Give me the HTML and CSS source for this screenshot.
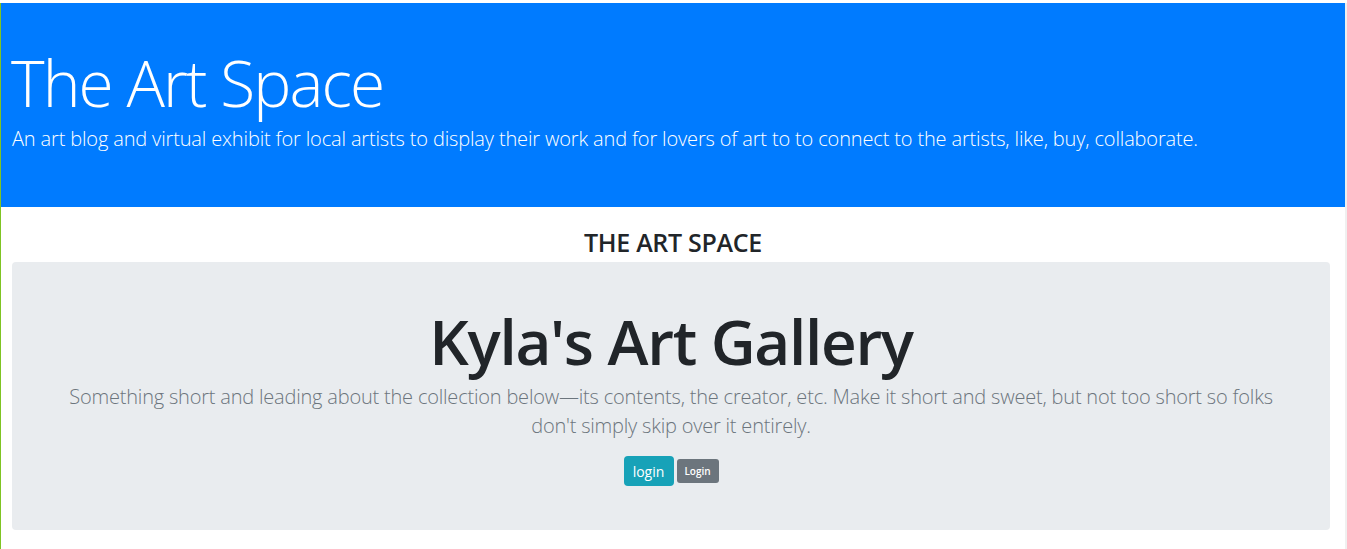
FILE: index.html
```html
<!DOCTYPE html>
<html lang="en">
<head>
<meta charset="utf-8">
<title>The Art Space</title>
<link rel="stylesheet" href="styles.css">
</head>
<body>
<div class="page">
  <header class="hero">
    <h1 class="hero-title">The Art Space</h1>
    <p class="hero-lead">An art blog and virtual exhibit for local artists to display their work and for lovers of art to to connect to the artists, like, buy, collaborate.</p>
  </header>
  <h3 class="brand">THE ART SPACE</h3>
  <section class="gallery">
    <h1 class="gallery-title">Kyla's Art Gallery</h1>
    <p class="gallery-lead">Something short and leading about the collection below—its contents, the creator, etc. Make it short and sweet, but not too short so folks don't simply skip over it entirely.</p>
    <div class="actions">
      <button class="btn btn-info">login</button>
      <button class="btn btn-secondary btn-sm">Login</button>
    </div>
  </section>
</div>
</body>
</html>
```
FILE: styles.css
```css
* { box-sizing: border-box; }
html, body { margin: 0; padding: 0; background: #fff; }
body {
  font-family: "Open Sans", "Noto Sans", "Liberation Sans", sans-serif;
  color: #212529;
  width: 1347px;
  height: 549px;
  overflow: hidden;
}
.page {
  width: 1345px;
  height: 549px;
  margin-top: 3px;
  border-left: 1px solid #7fc423;
  box-shadow: 2px 0 0 #f0f0f0;
}
.hero {
  background: #007bff;
  color: #fff;
  height: 204px;
  padding: 42px 11px 0 10px;
}
.hero-title {
  margin: 0;
  font-size: 64px;
  font-weight: 300;
  line-height: 76px;
  letter-spacing: -1.9px;
}
.hero-lead {
  margin: 3px 0 0 1px;
  font-size: 20px;
  font-weight: 300;
  line-height: 30px;
  letter-spacing: -0.15px;
}
.brand {
  margin: 0;
  text-align: center;
  font-size: 25px;
  font-weight: 600;
  height: 55px;
  padding-top: 15px;
  line-height: 40px;
  letter-spacing: -0.3px;
}
.gallery {
  margin: 0 15px 0 11px;
  background: #e9ecef;
  border-radius: 4px;
  height: 268px;
  padding: 41px 40px 0;
  text-align: center;
}
.gallery-title {
  margin: 0;
  font-size: 62px;
  font-weight: 600;
  line-height: 76px;
  letter-spacing: -1.3px;
}
.gallery-lead {
  margin: 3px 0 0;
  font-size: 20px;
  font-weight: 300;
  line-height: 29px;
  color: #6c757d;
  letter-spacing: -0.2px;
}
.actions {
  margin-top: 16px;
  display: flex;
  justify-content: center;
  align-items: center;
  gap: 3px;
}
.btn {
  font-family: inherit;
  border: 0;
  color: #fff;
  border-radius: 4px;
  cursor: pointer;
}
.btn-info {
  background: #17a2b8;
  width: 50px;
  height: 30px;
  font-size: 14px;
  padding: 0;
}
.btn-secondary {
  background: #6c757d;
}
.btn-sm {
  width: 42px;
  height: 24px;
  font-size: 10px;
  font-weight: 600;
  padding: 0;
  border-radius: 3px;
}
```
